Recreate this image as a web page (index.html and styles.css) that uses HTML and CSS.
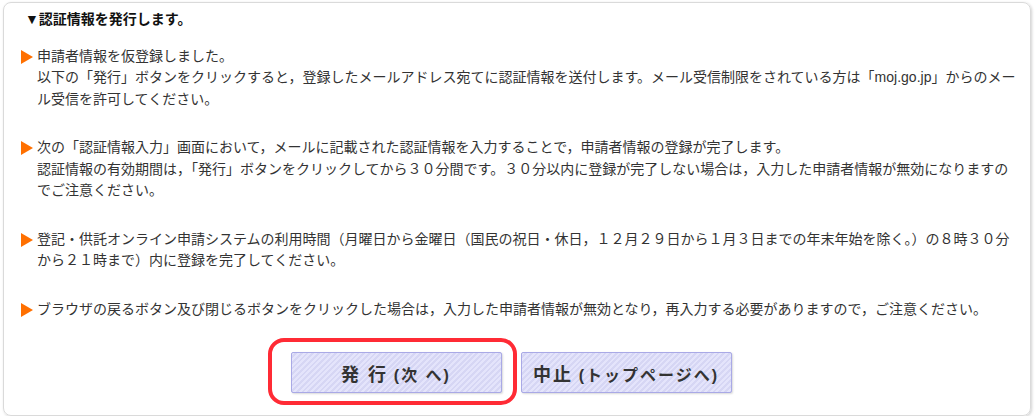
FILE: index.html
```html
<!DOCTYPE html>
<html lang="ja">
<head>
  <meta charset="UTF-8" />
  <title>認証情報の発行</title>
  <link rel="stylesheet" href="styles.css">
</head>
<body>

  <div class="panel">
    <h2 class="panel-title">▼認証情報を発行します。</h2>

    <!-- 注意事項 -->
    <div class="note">
      <span class="mark"></span>
      <p>申請者情報を仮登録しました。<br>以下の「発行」ボタンをクリックすると，登録したメールアドレス宛てに認証情報を送付します。メール受信制限をされている方は「moj.go.jp」からのメール受信を許可してください。</p>
    </div>

    <div class="note">
      <span class="mark"></span>
      <p>次の「認証情報入力」画面において，メールに記載された認証情報を入力することで，申請者情報の登録が完了します。<br>認証情報の有効期間は，「発行」ボタンをクリックしてから３０分間です。３０分以内に登録が完了しない場合は，入力した申請者情報が無効になりますのでご注意ください。</p>
    </div>

    <div class="note">
      <span class="mark"></span>
      <p>登記・供託オンライン申請システムの利用時間（月曜日から金曜日（国民の祝日・休日，１２月２９日から１月３日までの年末年始を除く。）の８時３０分から２１時まで）内に登録を完了してください。</p>
    </div>

    <div class="note">
      <span class="mark"></span>
      <p>ブラウザの戻るボタン及び閉じるボタンをクリックした場合は，入力した申請者情報が無効となり，再入力する必要がありますので，ご注意ください。</p>
    </div>

    <!-- ボタン -->
    <div class="actions">
      <div class="highlight-wrap">
        <button class="btn" type="button"><span class="big">発 行</span> <span class="small">(次 へ)</span></button>
        <span class="highlight"></span>
      </div>
      <button class="btn" type="button"><span class="big">中止</span> <span class="small">(トップページへ)</span></button>
    </div>
  </div>

</body>
</html>
```

FILE: styles.css
```css
body {
  margin: 0;
  padding: 2px 5px 0 3px;
  background: #fff;
  font-family: "Liberation Sans", "Noto Sans CJK JP", sans-serif;
  color: #333;
}

.panel {
  border: 1px solid #dadada;
  border-radius: 8px;
  box-shadow: 1px 1px 3px rgba(0, 0, 0, 0.18);
  padding: 6px 9px 22px 16px;
  height: 414px;
  box-sizing: border-box;
}

.panel-title {
  margin: 0 0 15px;
  padding-left: 5px;
  font-size: 14px;
  line-height: 21.5px;
  font-weight: bold;
  color: #111;
}

.note {
  display: flex;
  align-items: flex-start;
  margin-bottom: 27px;
}

.mark {
  flex: none;
  width: 0;
  height: 0;
  margin: 4px 4px 0 1px;
  border-top: 7px solid transparent;
  border-bottom: 7px solid transparent;
  border-left: 12px solid #ff7000;
}

.note p {
  margin: 0;
  font-size: 14px;
  line-height: 21.5px;
}

.actions {
  display: flex;
  justify-content: center;
  gap: 19px;
  margin-top: 32px;
  padding-right: 19px;
}

.highlight-wrap {
  position: relative;
}

.highlight {
  position: absolute;
  left: -23px;
  top: -14px;
  right: -15px;
  bottom: -12px;
  border: 4.5px solid #ff2b35;
  border-radius: 16px;
  pointer-events: none;
}

.btn {
  width: 211px;
  height: 41px;
  padding: 0;
  border: 1px solid #a9a9e6;
  border-radius: 2px;
  background-color: #dcdcf8;
  background-image: repeating-linear-gradient(135deg, #e4e4fb 0 2px, #d6d6f4 2px 4px);
  box-shadow: 1px 1px 2px rgba(0, 0, 0, 0.15);
  font-family: "Liberation Sans", "Noto Sans CJK JP", sans-serif;
  font-weight: bold;
  letter-spacing: 2px;
  color: #333;
  cursor: pointer;
}

.btn .big {
  font-size: 18px;
}

.btn .small {
  font-size: 16px;
}
```
